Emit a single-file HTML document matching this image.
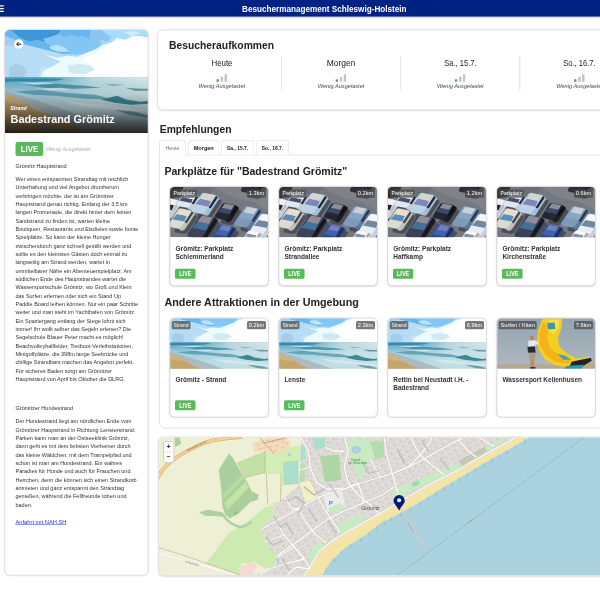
<!DOCTYPE html>
<html lang="de"><head><meta charset="utf-8"><title>Besuchermanagement Schleswig-Holstein</title>
<style>
*{box-sizing:border-box;margin:0;padding:0}
html,body{width:600px;height:600px;overflow:hidden;background:#fff;font-family:"Liberation Sans",sans-serif;color:#222}
.abs{position:absolute}
.t{position:absolute;white-space:nowrap;line-height:1;transform-origin:0 50%}
#hdr{left:0;top:0;width:2400px;height:66px;background:#002282;box-shadow:0 3.2px 8px rgba(0,0,0,.4)}
.card{position:absolute;background:#fff;border:3px solid #d6d6d6;border-radius:24px;box-shadow:0 2px 6px rgba(0,0,0,.12);overflow:hidden}
.live{position:absolute;background:#5cb85c;border-radius:6px}
.badge{position:absolute;background:rgba(75,75,75,.75);border-radius:6px;height:32.8px}
.pc{position:absolute;width:397.6px;height:399.2px;background:#fff;border:3px solid #cfcfcf;border-radius:20px;box-shadow:0 2px 6.4px rgba(0,0,0,.13);overflow:hidden}
.pc svg{position:absolute;left:0;top:0}
.tab{position:absolute;top:561.2px;height:57.6px;border:3px solid #dadada;border-bottom:none;border-radius:10px 10px 0 0;background:#fff}
.vline{position:absolute;top:223.2px;width:2.4px;height:137.6px;background:#cfcfcf}
.bar{position:absolute;width:9.6px;background:#c4c4c4}
</style></head><body><div style="position:absolute;left:0;top:0;width:2400px;height:2400px;transform:scale(0.25);transform-origin:0 0">
<div id="hdr" class="abs"></div>
<div class="abs" style="left:0;top:20.8px;width:15.2px;height:4.8px;background:#fff"></div>
<div class="abs" style="left:0;top:32px;width:15.2px;height:4.8px;background:#fff"></div>
<div class="abs" style="left:0;top:43.2px;width:15.2px;height:4.8px;background:#fff"></div>
<div class="t" style="left:968.4px;top:15.92px;font-size:36px;font-weight:bold;color:#fff;transform:scaleX(0.9066);">Besuchermanagement Schleswig-Holstein</div>
<div class="card" style="left:17.2px;top:116px;width:576.8px;height:2186.4px"><svg width="576" height="413.6" viewBox="0 0 144 103.4" style="position:absolute;left:0;top:0"><defs><linearGradient id="hsea" x1="0" y1="0" x2="0" y2="1"><stop offset="0" stop-color="#4a9cbc"/><stop offset="0.1" stop-color="#6db2cc"/><stop offset="0.28" stop-color="#a4d0de"/><stop offset="0.6" stop-color="#bcdce4"/><stop offset="1" stop-color="#b4c6cc"/></linearGradient><linearGradient id="hseaR" x1="0" y1="0" x2="1" y2="0"><stop offset="0" stop-color="#dfeceb" stop-opacity="0"/><stop offset="0.45" stop-color="#dfeceb" stop-opacity="0.75"/><stop offset="1" stop-color="#e6f0ee" stop-opacity="0.95"/></linearGradient><linearGradient id="hseaRv" x1="0" y1="0" x2="0" y2="1"><stop offset="0" stop-color="#fff" stop-opacity="1"/><stop offset="1" stop-color="#fff" stop-opacity="0"/></linearGradient><mask id="hm"><rect x="40" y="47" width="104" height="45" fill="url(#hseaRv)"/></mask><linearGradient id="hdark" x1="0" y1="0" x2="0" y2="1"><stop offset="0" stop-color="#000" stop-opacity="0"/><stop offset="0.3" stop-color="#000" stop-opacity="0.09"/><stop offset="0.55" stop-color="#000" stop-opacity="0.3"/><stop offset="0.8" stop-color="#000" stop-opacity="0.6"/><stop offset="1" stop-color="#000" stop-opacity="0.82"/></linearGradient><filter id="hb" x="-10%" y="-10%" width="120%" height="120%"><feGaussianBlur stdDeviation="0.7"/></filter></defs><symbol id="beachpic" viewBox="0 0 144 103.4" preserveAspectRatio="none"><rect width="144" height="48" fill="#a9d9f7"/><g filter="url(#hb)"><path d="M0 0H100L96 8L86 13L78 20L68 24L56 24L40 20L24 16L10 13L0 11Z" fill="#68b6ee"/><path d="M6 0H56L52 5L46 8L40 12L32 10L24 12L14 7Z" fill="#3f95d6"/><path d="M38 9L46 7L54 4L60 7L66 5L72 7L76 6L86 9L94 8L97 14L90 20L80 24L70 25L62 22L54 18L46 16L41 13Z" fill="#83c6f6"/><path d="M86 0H112L108 6L102 12L96 10L90 12L84 8Z" fill="#8ec4f0"/><path d="M96 0H144V10L128 8L118 12L110 10L104 6Z" fill="#a9dcfb"/><path d="M0 11L10 13L24 16L40 20L56 24L62 34L58 48H0Z" fill="#b7ddf6"/><path d="M0 6L8 9L16 13L12 17L0 15Z" fill="#a4cdf0"/><path d="M4 38L10 34L18 36L22 42L18 48H4Z" fill="#a6cde6"/><path d="M34 40L40 36L46 40L46 48H34Z" fill="#c9e5f3"/><path d="M44 17L52 15L60 18L64 22L54 22L47 20Z" fill="#b9e2fb"/><path d="M40 25L52 28L62 26L72 27L84 22L92 19L98 15L106 13L112 8L120 10L128 6L144 8V48H36L38 42L48 36L56 32Z" fill="#ecfbff"/><path d="M78 28L90 25L100 17L112 10L124 10L132 6L144 8V48H80L88 40Z" fill="#ffffff"/><path d="M62 36L74 34L86 36L90 40L80 44L68 44L64 42Z" fill="#d3e9f1"/><path d="M118 2L130 1L136 4L126 6Z" fill="#d0ecfb"/></g><rect y="47.4" width="144" height="56" fill="url(#hsea)"/><rect x="40" y="47.4" width="104" height="45" fill="url(#hseaR)" mask="url(#hm)"/><g filter="url(#hb)"><path d="M0 49H60L52 51L30 52L10 51.5L0 52Z" fill="#2e7d9d" opacity=".8"/><path d="M20 55L50 54L80 56L96 58L70 59L40 58Z" fill="#2d7f98" opacity=".7"/><path d="M14 53L40 52.5L50 54L30 55Z" fill="#d4ebf2" opacity=".8"/><path d="M30 59L56 58L66 60L44 61Z" fill="#d4ebf2" opacity=".8"/><path d="M10 62L36 60L60 63L90 65L110 70L80 69L50 66L28 65Z" fill="#4790a6" opacity=".7"/><path d="M96 70L112 66L122 70L136 72L144 71V74L126 75L110 73Z" fill="#2b7f8a" opacity=".9"/><path d="M120 58L136 59L144 59V61L130 61Z" fill="#4d8b8f" opacity=".8"/><path d="M100 54L120 55L108 56.5Z" fill="#5f9aa5" opacity=".6"/><path d="M110 80L130 82L144 86V88L124 85Z" fill="#3f8790" opacity=".7"/><path d="M60 72L90 74L120 78L144 80V83L110 80L80 77Z" fill="#dcedf0" opacity=".7"/><path d="M0 61L20 67L45 75L82 88L112 103.4H60L41 84L20 73L0 65Z" fill="#a9b7be" opacity=".9"/><path d="M0 65L8 67L20 73L30 79L41 84L60 92L86 103.4H0Z" fill="#c5a56c"/><path d="M0 65L8 67L20 73L22 76L10 74L0 72Z" fill="#d2b27a"/><path d="M30 92L50 96L66 103.4H40Z" fill="#b3a489"/></g></symbol><use href="#beachpic" x="0" y="0" width="144" height="103.4"/><rect y="48" width="144" height="55.4" fill="url(#hdark)"/></svg></div>
<div class="abs" style="left:56px;top:156.8px;width:38.4px;height:38.4px;border-radius:50%;background:#fff"></div>
<svg width="38.4" height="38.4" viewBox="0 0 9.6 9.6" class="abs" style="left:56px;top:156.8px"><path d="M7.3 4.9H2.8M4.7 2.9L2.7 4.9L4.7 6.9" fill="none" stroke="#111" stroke-width="1"/></svg>
<div class="t" style="left:40.8px;top:422.24px;font-size:22.4px;font-weight:bold;font-style:italic;color:#fff;transform:scaleX(0.9306);">Strand</div>
<div class="t" style="left:42px;top:454.48px;font-size:44.8px;font-weight:bold;color:#fff;transform:scaleX(0.9744);">Badestrand Grömitz</div>
<div class="live" style="left:62px;top:567.6px;width:110.8px;height:56.4px;border-radius:8px"></div>
<div class="t" style="left:82.6px;top:579.68px;font-size:34.4px;font-weight:bold;color:#fff;transform:scaleX(0.9156);">LIVE</div>
<div class="t" style="left:183.6px;top:584.12px;font-size:21.6px;font-style:italic;color:#b0b0b0;">Wenig Ausgelastet</div>
<div class="t" style="left:62px;top:652.56px;font-size:22px;color:#333;transform:scaleX(1.0090);">Grömitz Hauptstrand</div>
<div class="abs" style="left:62px;top:700.12px;font-size:22px;line-height:33.28px;white-space:nowrap;color:#333;transform-origin:0 0;">Wer einen entspannten Strandtag mit reichlich<br>
Unterhaltung und viel Angebot drumherum<br>
verbringen möchte, der ist am Grömitzer<br>
Hauptstrand genau richtig. Entlang der 3,5 km<br>
langen Promenade, die direkt hinter dem feinen<br>
Sandstrand zu finden ist, warten kleine<br>
Boutiquen, Restaurants und Eisdielen sowie bunte<br>
Spielplätze. So kann der kleine Hunger<br>
zwischendurch ganz schnell gestillt werden und<br>
sollte es den kleinsten Gästen doch einmal zu<br>
langweilig am Strand werden, wartet in<br>
unmittelbarer Nähe ein Abenteuerspielplatz. Am<br>
südlichen Ende des Hauptstrandes wartet die<br>
Wassersportschule Grömitz, wo Groß und Klein<br>
das Surfen erlernen oder sich ein Stand Up<br>
Paddle Board leihen können. Nur ein paar Schritte<br>
weiter und man steht im Yachthafen von Grömitz.<br>
Ein Spaziergang entlang der Stege lohnt sich<br>
immer! Ihr wollt selber das Segeln erlenen? Die<br>
Segelschule Blauer Peter macht es möglich!<br>
Beachvolleyballfelder, Tretboot-Verleihstationen,<br>
Minigolfplätze, die 398m lange Seebrücke und<br>
chillige Strandbars machen das Angebot perfekt.<br>
Für sicheres Baden sorgt am Grömitzer<br>
Hauptstrand von April bis Oktober die DLRG.</div>
<div class="t" style="left:62px;top:1622.16px;font-size:22px;color:#333;transform:scaleX(1.0059);">Grömitzer Hundestrand</div>
<div class="abs" style="left:62px;top:1668.92px;font-size:22px;line-height:33.28px;white-space:nowrap;color:#333;transform-origin:0 0;">Der Hundestrand liegt am nördlichen Ende vom<br>
Grömitzer Haupstrand in Richtung Lensterstrand.<br>
Parken kann man an der Ostseeklinik Grömitz,<br>
dann geht es mit dem liebsten Vierbeiner durch<br>
das kleine Wäldchen, mit dem Trampelpfad und<br>
schon ist man am Hundestrand. Ein wahres<br>
Paradies für Hunde und auch für Frauchen und<br>
Herrchen, denn die können sich einen Strandkorb<br>
anmieten und ganz entspannt den Strandtag<br>
genießen, während die Fellfreunde toben und<br>
baden.</div>
<div class="t" style="left:62.4px;top:2076.56px;font-size:22px;color:#1a3fd0;transform:scaleX(1.0429);"><u>Anfahrt mit NAH.SH</u></div>
<div class="card" style="left:628px;top:117.6px;width:1840px;height:323.2px"></div>
<div class="t" style="left:676.4px;top:158.28px;font-size:46px;font-weight:bold;transform:scaleX(0.8986);">Besucheraufkommen</div>
<div class="t" style="left:845.6px;top:235.08px;font-size:33.2px;transform:scaleX(0.9485);">Heute</div>
<div class="bar" style="left:866px;top:317.2px;height:9.6px;background:#4cae4c;border-radius:2px"></div><div class="bar" style="left:882.8px;top:306.8px;height:20px"></div><div class="bar" style="left:898px;top:296.8px;height:30px"></div>
<div class="t" style="left:794.4px;top:334.04px;font-size:21.2px;font-style:italic;color:#444;transform:scaleX(1.0621);">Wenig Ausgelastet</div>
<div class="vline" style="left:1124.8px"></div>
<div class="t" style="left:1307px;top:235.08px;font-size:33.2px;transform:scaleX(1.0202);">Morgen</div>
<div class="bar" style="left:1342.8px;top:317.2px;height:9.6px;background:#4cae4c;border-radius:2px"></div><div class="bar" style="left:1359.6px;top:306.8px;height:20px"></div><div class="bar" style="left:1374.8px;top:296.8px;height:30px"></div>
<div class="t" style="left:1271.2px;top:334.04px;font-size:21.2px;font-style:italic;color:#444;transform:scaleX(1.0621);">Wenig Ausgelastet</div>
<div class="vline" style="left:1601.6px"></div>
<div class="t" style="left:1776.6px;top:235.08px;font-size:33.2px;transform:scaleX(0.9094);">Sa., 15.7.</div>
<div class="bar" style="left:1819.6px;top:317.2px;height:9.6px;background:#4cae4c;border-radius:2px"></div><div class="bar" style="left:1836.4px;top:306.8px;height:20px"></div><div class="bar" style="left:1851.6px;top:296.8px;height:30px"></div>
<div class="t" style="left:1748px;top:334.04px;font-size:21.2px;font-style:italic;color:#444;transform:scaleX(1.0621);">Wenig Ausgelastet</div>
<div class="vline" style="left:2078.4px"></div>
<div class="t" style="left:2253.4px;top:235.08px;font-size:33.2px;transform:scaleX(0.9094);">So., 16.7.</div>
<div class="bar" style="left:2296.4px;top:317.2px;height:9.6px;background:#4cae4c;border-radius:2px"></div><div class="bar" style="left:2313.2px;top:306.8px;height:20px"></div><div class="bar" style="left:2328.4px;top:296.8px;height:30px"></div>
<div class="t" style="left:2224.8px;top:334.04px;font-size:21.2px;font-style:italic;color:#444;transform:scaleX(1.0621);">Wenig Ausgelastet</div>
<div class="t" style="left:639.2px;top:492.92px;font-size:45.2px;font-weight:bold;transform:scaleX(0.9139);">Empfehlungen</div>
<div class="abs" style="left:636px;top:618px;width:1840px;height:1095.6px;border:3px solid #dadada;border-radius:0 0 0 24px;background:#fff"></div>
<div class="tab" style="left:636px;width:107px;height:60.8px;"></div><div class="t" style="left:662px;top:581.12px;font-size:20.4px;color:#667386;transform:scaleX(1.0290);">Heute</div>
<div class="tab" style="left:753px;width:125px;background:#fff;"></div><div class="t" style="left:775px;top:581.12px;font-size:20.4px;font-weight:bold;transform:scaleX(1.0864);">Morgen</div>
<div class="tab" style="left:885px;width:133px;background:#fff;"></div><div class="t" style="left:908px;top:581.12px;font-size:20.4px;font-weight:bold;transform:scaleX(0.9737);">Sa., 15.7.</div>
<div class="tab" style="left:1025px;width:132px;background:#fff;"></div><div class="t" style="left:1047px;top:581.12px;font-size:20.4px;font-weight:bold;transform:scaleX(0.9728);">So., 16.7.</div>
<div class="t" style="left:658.4px;top:661.16px;font-size:44px;font-weight:bold;transform:scaleX(0.9553);">Parkplätze für "Badestrand Grömitz"</div>
<div class="t" style="left:658.4px;top:1185.16px;font-size:44px;font-weight:bold;transform:scaleX(0.9772);">Andere Attraktionen in der Umgebung</div>
<div class="pc" style="left:677.6px;top:745.2px"><svg width="401.6" height="202.8" viewBox="0 0 99 51" preserveAspectRatio="none" style="left:-2.4px;top:-2.4px"><defs><filter id="cb" x="-5%" y="-5%" width="110%" height="110%"><feGaussianBlur stdDeviation="0.55"/></filter></defs><rect width="99" height="51" fill="#74787f"/><g filter="url(#cb)"><path d="M44 0H99V26L84 16L66 12L52 6Z" fill="#7e8289"/><path d="M0 0H14L10 10L0 12Z" fill="#2e3138"/><path d="M22 0H44L40 8L30 10Z" fill="#6a6e76"/><polygon points="87.2,-6.4 98.7,-4.0 99.0,-2.5 90.1,11.3 87.1,12.6 77.2,10.6 76.4,8.5 85.2,-5.3" fill="#2b2e35" opacity="0.55"/><polygon points="92.6,-9.4 96.2,-7.0 96.5,-5.5 87.6,8.3 84.6,9.6 81.0,7.2" fill="#2b2f37"/><polygon points="93.3,-8.5 95.3,-7.2 89.0,2.5 87.0,1.2" fill="#1d2027"/><polygon points="81.1,-11.8 92.6,-9.4 92.9,-7.9 84.0,5.9 81.0,7.2 71.1,5.2 70.3,3.1 79.1,-10.7" fill="#2b2f37"/><polygon points="78.4,-6.6 88.8,-4.5 86.8,0.8 73.9,-1.8" fill="#4a5262"/><polygon points="81.7,-11.3 91.6,-9.3 88.7,-4.3 78.3,-6.5" fill="#7c8490"/><polygon points="6.8,17.5 14.2,19.1 14.1,20.5 5.2,34.3 2.9,35.7 -3.5,34.5 -3.6,32.5 5.2,18.7" fill="#2b2e35" opacity="0.55"/><polygon points="8.1,13.7 11.7,16.1 11.6,17.5 2.7,31.3 0.4,32.7 -3.2,30.3" fill="#c9ced8"/><polygon points="8.4,14.5 10.4,15.8 4.1,25.5 2.1,24.2" fill="#b9bec8"/><polygon points="0.7,12.1 8.1,13.7 8.0,15.1 -0.9,28.9 -3.2,30.3 -9.6,29.1 -9.7,27.1 -0.9,13.3" fill="#e6e8ec"/><polygon points="-2.2,17.3 4.5,18.6 2.1,23.8 -6.2,22.1" fill="#23262e"/><polygon points="1.0,12.6 7.4,13.9 4.4,18.8 -2.3,17.4" fill="#f0f0f2"/><polygon points="21.1,12.1 31.8,14.3 32.2,15.5 25.6,25.8 23.0,26.7 13.8,24.9 12.8,23.2 19.5,12.9" fill="#2b2e35" opacity="0.55"/><polygon points="25.7,8.9 29.3,11.3 29.7,12.5 23.1,22.8 20.5,23.7 16.9,21.3" fill="#c4cede"/><polygon points="26.4,9.6 28.4,10.9 23.7,18.2 21.7,16.9" fill="#2a2e38"/><polygon points="15.0,6.7 25.7,8.9 26.1,10.1 19.5,20.4 16.9,21.3 7.7,19.5 6.7,17.8 13.4,7.5" fill="#e0e7f4"/><polygon points="13.1,10.6 22.8,12.6 21.5,16.6 9.5,14.1" fill="#46526a"/><polygon points="15.6,7.1 24.8,9.0 22.7,12.7 13.0,10.7" fill="#f0f4fa"/><polygon points="39.7,11.6 51.2,14.0 51.3,15.7 41.1,31.6 38.0,33.1 28.1,31.1 27.4,28.8 37.6,12.9" fill="#2b2e35" opacity="0.55"/><polygon points="45.1,8.6 48.7,11.0 48.8,12.7 38.6,28.6 35.5,30.1 31.9,27.7" fill="#a3bfd9"/><polygon points="45.7,9.6 47.7,10.9 40.5,22.1 38.5,20.8" fill="#23262e"/><polygon points="33.6,6.2 45.1,8.6 45.2,10.3 35.0,26.2 31.9,27.7 22.0,25.7 21.3,23.4 31.5,7.5" fill="#bcd3e6"/><polygon points="30.4,12.1 40.8,14.3 38.4,20.3 25.5,17.7" fill="#7f86b8"/><polygon points="34.2,6.8 44.1,8.8 40.7,14.5 30.3,12.3" fill="#d8d4c8"/><polygon points="60.1,21.9 70.8,24.1 71.1,25.5 63.1,37.9 60.3,39.1 51.2,37.2 50.4,35.3 58.3,22.9" fill="#2b2e35" opacity="0.55"/><polygon points="64.7,18.7 68.3,21.1 68.6,22.5 60.6,34.9 57.8,36.1 54.2,33.7" fill="#1a1c22"/><polygon points="65.4,19.5 67.3,20.8 61.7,29.6 59.7,28.3" fill="#101116"/><polygon points="54.0,16.5 64.7,18.7 65.0,20.1 57.0,32.5 54.2,33.7 45.1,31.8 44.3,29.9 52.2,17.5" fill="#262830"/><polygon points="51.6,21.1 61.3,23.1 59.5,27.9 47.6,25.4" fill="#3c4a66"/><polygon points="54.6,17.0 63.8,18.8 61.2,23.3 51.5,21.3" fill="#8a90a0"/><polygon points="16.6,27.3 27.3,29.5 27.4,31.2 17.6,46.3 14.7,47.8 5.5,45.9 4.9,43.7 14.6,28.6" fill="#2b2e35" opacity="0.55"/><polygon points="21.2,24.1 24.8,26.5 24.9,28.2 15.1,43.3 12.2,44.8 8.6,42.4" fill="#c2c0ba"/><polygon points="21.8,25.0 23.7,26.4 16.9,37.1 14.9,35.8" fill="#44474e"/><polygon points="10.5,21.9 21.2,24.1 21.3,25.8 11.5,40.9 8.6,42.4 -0.6,40.5 -1.2,38.3 8.5,23.2" fill="#dcdad4"/><polygon points="7.5,27.6 17.1,29.5 14.7,35.3 2.8,32.9" fill="#5b8db4"/><polygon points="11.0,22.4 20.2,24.3 17.0,29.7 7.3,27.7" fill="#e6dfcf"/><polygon points="82.2,25.1 93.7,27.5 93.8,29.2 83.6,45.1 80.5,46.6 70.6,44.6 69.9,42.3 80.1,26.4" fill="#2b2e35" opacity="0.55"/><polygon points="87.6,22.1 91.2,24.5 91.3,26.2 81.1,42.1 78.0,43.6 74.4,41.2" fill="#5a7a9e"/><polygon points="88.2,23.1 90.2,24.4 83.0,35.6 81.0,34.3" fill="#2a3444"/><polygon points="76.1,19.7 87.6,22.1 87.7,23.8 77.5,39.7 74.4,41.2 64.5,39.2 63.8,36.9 74.0,21.0" fill="#7d9aba"/><polygon points="72.9,25.6 83.3,27.8 80.9,33.8 68.0,31.2" fill="#86a6c6"/><polygon points="76.7,20.3 86.6,22.3 83.2,28.0 72.8,25.8" fill="#c9d0da"/><polygon points="37.6,33.8 49.9,36.4 50.0,38.3 38.5,56.3 35.0,58.0 24.4,55.9 23.8,53.3 35.3,35.3" fill="#2b2e35" opacity="0.55"/><polygon points="43.8,31.0 47.4,33.4 47.5,35.3 36.0,53.3 32.5,55.0 28.9,52.6" fill="#1c1e26"/><polygon points="44.4,32.1 46.4,33.4 38.3,46.1 36.3,44.7" fill="#14151a"/><polygon points="31.5,28.4 43.8,31.0 43.9,32.9 32.4,50.9 28.9,52.6 18.3,50.5 17.7,47.9 29.2,29.9" fill="#3c4256"/><polygon points="27.9,35.1 39.0,37.4 36.1,44.2 22.3,41.4" fill="#44709a"/><polygon points="32.1,29.1 42.7,31.2 38.9,37.6 27.7,35.3" fill="#948c94"/><polygon points="97.7,32.6 109.2,35.0 109.3,36.8 98.7,53.3 95.4,55.0 85.6,53.0 84.9,50.5 95.6,34.0" fill="#2b2e35" opacity="0.55"/><polygon points="103.1,29.6 106.7,32.0 106.8,33.8 96.2,50.3 92.9,52.0 89.3,49.6" fill="#c4ccd8"/><polygon points="103.7,30.6 105.7,31.9 98.2,43.6 96.2,42.3" fill="#8a94a4"/><polygon points="91.6,27.2 103.1,29.6 103.2,31.4 92.6,47.9 89.3,49.6 79.5,47.6 78.8,45.1 89.5,28.6" fill="#e8edf4"/><polygon points="88.3,33.4 98.7,35.5 96.0,41.8 83.1,39.2" fill="#7088a4"/><polygon points="92.2,27.8 102.0,29.8 98.6,35.7 88.1,33.6" fill="#f6f7fa"/><polygon points="57.6,43.4 68.3,45.6 68.5,47.1 59.6,60.9 56.8,62.2 47.6,60.4 46.9,58.3 55.7,44.5" fill="#2b2e35" opacity="0.55"/><polygon points="62.2,40.2 65.8,42.6 66.0,44.1 57.1,57.9 54.3,59.2 50.7,56.8" fill="#2c468a"/><polygon points="62.8,41.1 64.8,42.4 58.5,52.1 56.5,50.8" fill="#1c2a50"/><polygon points="51.5,38.0 62.2,40.2 62.4,41.7 53.5,55.5 50.7,56.8 41.5,55.0 40.8,52.9 49.6,39.1" fill="#2f4c92"/><polygon points="48.8,43.2 58.5,45.1 56.4,50.4 44.4,48.0" fill="#3f62a8"/><polygon points="52.1,38.5 61.2,40.4 58.4,45.3 48.7,43.3" fill="#6f80c0"/><polygon points="85.0,49.6 94.0,51.4 94.4,52.4 89.0,60.7 86.9,61.4 79.1,59.8 78.3,58.5 83.6,50.2" fill="#2b2e35" opacity="0.55"/><polygon points="87.9,46.0 91.5,48.4 91.9,49.4 86.5,57.7 84.4,58.4 80.8,56.0" fill="#c8ccd4"/><polygon points="88.5,46.6 90.5,47.9 86.7,53.8 84.8,52.4" fill="#a0a8b4"/><polygon points="78.9,44.2 87.9,46.0 88.3,47.0 82.9,55.3 80.8,56.0 73.0,54.4 72.2,53.1 77.5,44.8" fill="#eef0f4"/><polygon points="77.3,47.3 85.5,49.0 84.6,52.2 74.4,50.1" fill="#8090a8"/><polygon points="79.4,44.5 87.1,46.1 85.5,49.1 77.3,47.4" fill="#f8f8f8"/></g></svg></div>
<div class="badge" style="left:687.2px;top:758px;width:100px"></div><div class="t" style="left:694.2px;top:764.4px;font-size:20.8px;color:#fff;transform:scaleX(0.9919);">Parkplatz</div><div class="badge" style="left:988px;top:758px;width:76px"></div><div class="t" style="left:995px;top:764.4px;font-size:20.8px;color:#fff;transform:scaleX(1.0946);">1.3km</div>
<div class="t" style="left:701.6px;top:980px;font-size:26px;font-weight:bold;color:#333;transform:scaleX(1.0082);">Grömitz: Parkplatz</div><div class="t" style="left:701.6px;top:1014px;font-size:26px;font-weight:bold;color:#333;">Schlemmerland</div>
<div class="live" style="left:700.4px;top:1075.2px;width:81.2px;height:39.6px"></div><div class="t" style="left:716.8px;top:1082.72px;font-size:25.6px;font-weight:bold;color:#fff;transform:scaleX(0.8578);">LIVE</div>
<div class="pc" style="left:1113.6px;top:745.2px"><svg width="401.6" height="202.8" viewBox="0 0 99 51" preserveAspectRatio="none" style="left:-2.4px;top:-2.4px"><defs><filter id="cb" x="-5%" y="-5%" width="110%" height="110%"><feGaussianBlur stdDeviation="0.55"/></filter></defs><rect width="99" height="51" fill="#74787f"/><g filter="url(#cb)"><path d="M44 0H99V26L84 16L66 12L52 6Z" fill="#7e8289"/><path d="M0 0H14L10 10L0 12Z" fill="#2e3138"/><path d="M22 0H44L40 8L30 10Z" fill="#6a6e76"/><polygon points="87.2,-6.4 98.7,-4.0 99.0,-2.5 90.1,11.3 87.1,12.6 77.2,10.6 76.4,8.5 85.2,-5.3" fill="#2b2e35" opacity="0.55"/><polygon points="92.6,-9.4 96.2,-7.0 96.5,-5.5 87.6,8.3 84.6,9.6 81.0,7.2" fill="#2b2f37"/><polygon points="93.3,-8.5 95.3,-7.2 89.0,2.5 87.0,1.2" fill="#1d2027"/><polygon points="81.1,-11.8 92.6,-9.4 92.9,-7.9 84.0,5.9 81.0,7.2 71.1,5.2 70.3,3.1 79.1,-10.7" fill="#2b2f37"/><polygon points="78.4,-6.6 88.8,-4.5 86.8,0.8 73.9,-1.8" fill="#4a5262"/><polygon points="81.7,-11.3 91.6,-9.3 88.7,-4.3 78.3,-6.5" fill="#7c8490"/><polygon points="6.8,17.5 14.2,19.1 14.1,20.5 5.2,34.3 2.9,35.7 -3.5,34.5 -3.6,32.5 5.2,18.7" fill="#2b2e35" opacity="0.55"/><polygon points="8.1,13.7 11.7,16.1 11.6,17.5 2.7,31.3 0.4,32.7 -3.2,30.3" fill="#c9ced8"/><polygon points="8.4,14.5 10.4,15.8 4.1,25.5 2.1,24.2" fill="#b9bec8"/><polygon points="0.7,12.1 8.1,13.7 8.0,15.1 -0.9,28.9 -3.2,30.3 -9.6,29.1 -9.7,27.1 -0.9,13.3" fill="#e6e8ec"/><polygon points="-2.2,17.3 4.5,18.6 2.1,23.8 -6.2,22.1" fill="#23262e"/><polygon points="1.0,12.6 7.4,13.9 4.4,18.8 -2.3,17.4" fill="#f0f0f2"/><polygon points="21.1,12.1 31.8,14.3 32.2,15.5 25.6,25.8 23.0,26.7 13.8,24.9 12.8,23.2 19.5,12.9" fill="#2b2e35" opacity="0.55"/><polygon points="25.7,8.9 29.3,11.3 29.7,12.5 23.1,22.8 20.5,23.7 16.9,21.3" fill="#c4cede"/><polygon points="26.4,9.6 28.4,10.9 23.7,18.2 21.7,16.9" fill="#2a2e38"/><polygon points="15.0,6.7 25.7,8.9 26.1,10.1 19.5,20.4 16.9,21.3 7.7,19.5 6.7,17.8 13.4,7.5" fill="#e0e7f4"/><polygon points="13.1,10.6 22.8,12.6 21.5,16.6 9.5,14.1" fill="#46526a"/><polygon points="15.6,7.1 24.8,9.0 22.7,12.7 13.0,10.7" fill="#f0f4fa"/><polygon points="39.7,11.6 51.2,14.0 51.3,15.7 41.1,31.6 38.0,33.1 28.1,31.1 27.4,28.8 37.6,12.9" fill="#2b2e35" opacity="0.55"/><polygon points="45.1,8.6 48.7,11.0 48.8,12.7 38.6,28.6 35.5,30.1 31.9,27.7" fill="#a3bfd9"/><polygon points="45.7,9.6 47.7,10.9 40.5,22.1 38.5,20.8" fill="#23262e"/><polygon points="33.6,6.2 45.1,8.6 45.2,10.3 35.0,26.2 31.9,27.7 22.0,25.7 21.3,23.4 31.5,7.5" fill="#bcd3e6"/><polygon points="30.4,12.1 40.8,14.3 38.4,20.3 25.5,17.7" fill="#7f86b8"/><polygon points="34.2,6.8 44.1,8.8 40.7,14.5 30.3,12.3" fill="#d8d4c8"/><polygon points="60.1,21.9 70.8,24.1 71.1,25.5 63.1,37.9 60.3,39.1 51.2,37.2 50.4,35.3 58.3,22.9" fill="#2b2e35" opacity="0.55"/><polygon points="64.7,18.7 68.3,21.1 68.6,22.5 60.6,34.9 57.8,36.1 54.2,33.7" fill="#1a1c22"/><polygon points="65.4,19.5 67.3,20.8 61.7,29.6 59.7,28.3" fill="#101116"/><polygon points="54.0,16.5 64.7,18.7 65.0,20.1 57.0,32.5 54.2,33.7 45.1,31.8 44.3,29.9 52.2,17.5" fill="#262830"/><polygon points="51.6,21.1 61.3,23.1 59.5,27.9 47.6,25.4" fill="#3c4a66"/><polygon points="54.6,17.0 63.8,18.8 61.2,23.3 51.5,21.3" fill="#8a90a0"/><polygon points="16.6,27.3 27.3,29.5 27.4,31.2 17.6,46.3 14.7,47.8 5.5,45.9 4.9,43.7 14.6,28.6" fill="#2b2e35" opacity="0.55"/><polygon points="21.2,24.1 24.8,26.5 24.9,28.2 15.1,43.3 12.2,44.8 8.6,42.4" fill="#c2c0ba"/><polygon points="21.8,25.0 23.7,26.4 16.9,37.1 14.9,35.8" fill="#44474e"/><polygon points="10.5,21.9 21.2,24.1 21.3,25.8 11.5,40.9 8.6,42.4 -0.6,40.5 -1.2,38.3 8.5,23.2" fill="#dcdad4"/><polygon points="7.5,27.6 17.1,29.5 14.7,35.3 2.8,32.9" fill="#5b8db4"/><polygon points="11.0,22.4 20.2,24.3 17.0,29.7 7.3,27.7" fill="#e6dfcf"/><polygon points="82.2,25.1 93.7,27.5 93.8,29.2 83.6,45.1 80.5,46.6 70.6,44.6 69.9,42.3 80.1,26.4" fill="#2b2e35" opacity="0.55"/><polygon points="87.6,22.1 91.2,24.5 91.3,26.2 81.1,42.1 78.0,43.6 74.4,41.2" fill="#5a7a9e"/><polygon points="88.2,23.1 90.2,24.4 83.0,35.6 81.0,34.3" fill="#2a3444"/><polygon points="76.1,19.7 87.6,22.1 87.7,23.8 77.5,39.7 74.4,41.2 64.5,39.2 63.8,36.9 74.0,21.0" fill="#7d9aba"/><polygon points="72.9,25.6 83.3,27.8 80.9,33.8 68.0,31.2" fill="#86a6c6"/><polygon points="76.7,20.3 86.6,22.3 83.2,28.0 72.8,25.8" fill="#c9d0da"/><polygon points="37.6,33.8 49.9,36.4 50.0,38.3 38.5,56.3 35.0,58.0 24.4,55.9 23.8,53.3 35.3,35.3" fill="#2b2e35" opacity="0.55"/><polygon points="43.8,31.0 47.4,33.4 47.5,35.3 36.0,53.3 32.5,55.0 28.9,52.6" fill="#1c1e26"/><polygon points="44.4,32.1 46.4,33.4 38.3,46.1 36.3,44.7" fill="#14151a"/><polygon points="31.5,28.4 43.8,31.0 43.9,32.9 32.4,50.9 28.9,52.6 18.3,50.5 17.7,47.9 29.2,29.9" fill="#3c4256"/><polygon points="27.9,35.1 39.0,37.4 36.1,44.2 22.3,41.4" fill="#44709a"/><polygon points="32.1,29.1 42.7,31.2 38.9,37.6 27.7,35.3" fill="#948c94"/><polygon points="97.7,32.6 109.2,35.0 109.3,36.8 98.7,53.3 95.4,55.0 85.6,53.0 84.9,50.5 95.6,34.0" fill="#2b2e35" opacity="0.55"/><polygon points="103.1,29.6 106.7,32.0 106.8,33.8 96.2,50.3 92.9,52.0 89.3,49.6" fill="#c4ccd8"/><polygon points="103.7,30.6 105.7,31.9 98.2,43.6 96.2,42.3" fill="#8a94a4"/><polygon points="91.6,27.2 103.1,29.6 103.2,31.4 92.6,47.9 89.3,49.6 79.5,47.6 78.8,45.1 89.5,28.6" fill="#e8edf4"/><polygon points="88.3,33.4 98.7,35.5 96.0,41.8 83.1,39.2" fill="#7088a4"/><polygon points="92.2,27.8 102.0,29.8 98.6,35.7 88.1,33.6" fill="#f6f7fa"/><polygon points="57.6,43.4 68.3,45.6 68.5,47.1 59.6,60.9 56.8,62.2 47.6,60.4 46.9,58.3 55.7,44.5" fill="#2b2e35" opacity="0.55"/><polygon points="62.2,40.2 65.8,42.6 66.0,44.1 57.1,57.9 54.3,59.2 50.7,56.8" fill="#2c468a"/><polygon points="62.8,41.1 64.8,42.4 58.5,52.1 56.5,50.8" fill="#1c2a50"/><polygon points="51.5,38.0 62.2,40.2 62.4,41.7 53.5,55.5 50.7,56.8 41.5,55.0 40.8,52.9 49.6,39.1" fill="#2f4c92"/><polygon points="48.8,43.2 58.5,45.1 56.4,50.4 44.4,48.0" fill="#3f62a8"/><polygon points="52.1,38.5 61.2,40.4 58.4,45.3 48.7,43.3" fill="#6f80c0"/><polygon points="85.0,49.6 94.0,51.4 94.4,52.4 89.0,60.7 86.9,61.4 79.1,59.8 78.3,58.5 83.6,50.2" fill="#2b2e35" opacity="0.55"/><polygon points="87.9,46.0 91.5,48.4 91.9,49.4 86.5,57.7 84.4,58.4 80.8,56.0" fill="#c8ccd4"/><polygon points="88.5,46.6 90.5,47.9 86.7,53.8 84.8,52.4" fill="#a0a8b4"/><polygon points="78.9,44.2 87.9,46.0 88.3,47.0 82.9,55.3 80.8,56.0 73.0,54.4 72.2,53.1 77.5,44.8" fill="#eef0f4"/><polygon points="77.3,47.3 85.5,49.0 84.6,52.2 74.4,50.1" fill="#8090a8"/><polygon points="79.4,44.5 87.1,46.1 85.5,49.1 77.3,47.4" fill="#f8f8f8"/></g></svg></div>
<div class="badge" style="left:1123.2px;top:758px;width:100px"></div><div class="t" style="left:1130.2px;top:764.4px;font-size:20.8px;color:#fff;transform:scaleX(0.9919);">Parkplatz</div><div class="badge" style="left:1424px;top:758px;width:76px"></div><div class="t" style="left:1431px;top:764.4px;font-size:20.8px;color:#fff;transform:scaleX(1.0946);">0.2km</div>
<div class="t" style="left:1137.6px;top:980px;font-size:26px;font-weight:bold;color:#333;transform:scaleX(1.0082);">Grömitz: Parkplatz</div><div class="t" style="left:1137.6px;top:1014px;font-size:26px;font-weight:bold;color:#333;">Strandallee</div>
<div class="live" style="left:1136.4px;top:1075.2px;width:81.2px;height:39.6px"></div><div class="t" style="left:1152.8px;top:1082.72px;font-size:25.6px;font-weight:bold;color:#fff;transform:scaleX(0.8578);">LIVE</div>
<div class="pc" style="left:1549.2px;top:745.2px"><svg width="401.6" height="202.8" viewBox="0 0 99 51" preserveAspectRatio="none" style="left:-2.4px;top:-2.4px"><defs><filter id="cb" x="-5%" y="-5%" width="110%" height="110%"><feGaussianBlur stdDeviation="0.55"/></filter></defs><rect width="99" height="51" fill="#74787f"/><g filter="url(#cb)"><path d="M44 0H99V26L84 16L66 12L52 6Z" fill="#7e8289"/><path d="M0 0H14L10 10L0 12Z" fill="#2e3138"/><path d="M22 0H44L40 8L30 10Z" fill="#6a6e76"/><polygon points="87.2,-6.4 98.7,-4.0 99.0,-2.5 90.1,11.3 87.1,12.6 77.2,10.6 76.4,8.5 85.2,-5.3" fill="#2b2e35" opacity="0.55"/><polygon points="92.6,-9.4 96.2,-7.0 96.5,-5.5 87.6,8.3 84.6,9.6 81.0,7.2" fill="#2b2f37"/><polygon points="93.3,-8.5 95.3,-7.2 89.0,2.5 87.0,1.2" fill="#1d2027"/><polygon points="81.1,-11.8 92.6,-9.4 92.9,-7.9 84.0,5.9 81.0,7.2 71.1,5.2 70.3,3.1 79.1,-10.7" fill="#2b2f37"/><polygon points="78.4,-6.6 88.8,-4.5 86.8,0.8 73.9,-1.8" fill="#4a5262"/><polygon points="81.7,-11.3 91.6,-9.3 88.7,-4.3 78.3,-6.5" fill="#7c8490"/><polygon points="6.8,17.5 14.2,19.1 14.1,20.5 5.2,34.3 2.9,35.7 -3.5,34.5 -3.6,32.5 5.2,18.7" fill="#2b2e35" opacity="0.55"/><polygon points="8.1,13.7 11.7,16.1 11.6,17.5 2.7,31.3 0.4,32.7 -3.2,30.3" fill="#c9ced8"/><polygon points="8.4,14.5 10.4,15.8 4.1,25.5 2.1,24.2" fill="#b9bec8"/><polygon points="0.7,12.1 8.1,13.7 8.0,15.1 -0.9,28.9 -3.2,30.3 -9.6,29.1 -9.7,27.1 -0.9,13.3" fill="#e6e8ec"/><polygon points="-2.2,17.3 4.5,18.6 2.1,23.8 -6.2,22.1" fill="#23262e"/><polygon points="1.0,12.6 7.4,13.9 4.4,18.8 -2.3,17.4" fill="#f0f0f2"/><polygon points="21.1,12.1 31.8,14.3 32.2,15.5 25.6,25.8 23.0,26.7 13.8,24.9 12.8,23.2 19.5,12.9" fill="#2b2e35" opacity="0.55"/><polygon points="25.7,8.9 29.3,11.3 29.7,12.5 23.1,22.8 20.5,23.7 16.9,21.3" fill="#c4cede"/><polygon points="26.4,9.6 28.4,10.9 23.7,18.2 21.7,16.9" fill="#2a2e38"/><polygon points="15.0,6.7 25.7,8.9 26.1,10.1 19.5,20.4 16.9,21.3 7.7,19.5 6.7,17.8 13.4,7.5" fill="#e0e7f4"/><polygon points="13.1,10.6 22.8,12.6 21.5,16.6 9.5,14.1" fill="#46526a"/><polygon points="15.6,7.1 24.8,9.0 22.7,12.7 13.0,10.7" fill="#f0f4fa"/><polygon points="39.7,11.6 51.2,14.0 51.3,15.7 41.1,31.6 38.0,33.1 28.1,31.1 27.4,28.8 37.6,12.9" fill="#2b2e35" opacity="0.55"/><polygon points="45.1,8.6 48.7,11.0 48.8,12.7 38.6,28.6 35.5,30.1 31.9,27.7" fill="#a3bfd9"/><polygon points="45.7,9.6 47.7,10.9 40.5,22.1 38.5,20.8" fill="#23262e"/><polygon points="33.6,6.2 45.1,8.6 45.2,10.3 35.0,26.2 31.9,27.7 22.0,25.7 21.3,23.4 31.5,7.5" fill="#bcd3e6"/><polygon points="30.4,12.1 40.8,14.3 38.4,20.3 25.5,17.7" fill="#7f86b8"/><polygon points="34.2,6.8 44.1,8.8 40.7,14.5 30.3,12.3" fill="#d8d4c8"/><polygon points="60.1,21.9 70.8,24.1 71.1,25.5 63.1,37.9 60.3,39.1 51.2,37.2 50.4,35.3 58.3,22.9" fill="#2b2e35" opacity="0.55"/><polygon points="64.7,18.7 68.3,21.1 68.6,22.5 60.6,34.9 57.8,36.1 54.2,33.7" fill="#1a1c22"/><polygon points="65.4,19.5 67.3,20.8 61.7,29.6 59.7,28.3" fill="#101116"/><polygon points="54.0,16.5 64.7,18.7 65.0,20.1 57.0,32.5 54.2,33.7 45.1,31.8 44.3,29.9 52.2,17.5" fill="#262830"/><polygon points="51.6,21.1 61.3,23.1 59.5,27.9 47.6,25.4" fill="#3c4a66"/><polygon points="54.6,17.0 63.8,18.8 61.2,23.3 51.5,21.3" fill="#8a90a0"/><polygon points="16.6,27.3 27.3,29.5 27.4,31.2 17.6,46.3 14.7,47.8 5.5,45.9 4.9,43.7 14.6,28.6" fill="#2b2e35" opacity="0.55"/><polygon points="21.2,24.1 24.8,26.5 24.9,28.2 15.1,43.3 12.2,44.8 8.6,42.4" fill="#c2c0ba"/><polygon points="21.8,25.0 23.7,26.4 16.9,37.1 14.9,35.8" fill="#44474e"/><polygon points="10.5,21.9 21.2,24.1 21.3,25.8 11.5,40.9 8.6,42.4 -0.6,40.5 -1.2,38.3 8.5,23.2" fill="#dcdad4"/><polygon points="7.5,27.6 17.1,29.5 14.7,35.3 2.8,32.9" fill="#5b8db4"/><polygon points="11.0,22.4 20.2,24.3 17.0,29.7 7.3,27.7" fill="#e6dfcf"/><polygon points="82.2,25.1 93.7,27.5 93.8,29.2 83.6,45.1 80.5,46.6 70.6,44.6 69.9,42.3 80.1,26.4" fill="#2b2e35" opacity="0.55"/><polygon points="87.6,22.1 91.2,24.5 91.3,26.2 81.1,42.1 78.0,43.6 74.4,41.2" fill="#5a7a9e"/><polygon points="88.2,23.1 90.2,24.4 83.0,35.6 81.0,34.3" fill="#2a3444"/><polygon points="76.1,19.7 87.6,22.1 87.7,23.8 77.5,39.7 74.4,41.2 64.5,39.2 63.8,36.9 74.0,21.0" fill="#7d9aba"/><polygon points="72.9,25.6 83.3,27.8 80.9,33.8 68.0,31.2" fill="#86a6c6"/><polygon points="76.7,20.3 86.6,22.3 83.2,28.0 72.8,25.8" fill="#c9d0da"/><polygon points="37.6,33.8 49.9,36.4 50.0,38.3 38.5,56.3 35.0,58.0 24.4,55.9 23.8,53.3 35.3,35.3" fill="#2b2e35" opacity="0.55"/><polygon points="43.8,31.0 47.4,33.4 47.5,35.3 36.0,53.3 32.5,55.0 28.9,52.6" fill="#1c1e26"/><polygon points="44.4,32.1 46.4,33.4 38.3,46.1 36.3,44.7" fill="#14151a"/><polygon points="31.5,28.4 43.8,31.0 43.9,32.9 32.4,50.9 28.9,52.6 18.3,50.5 17.7,47.9 29.2,29.9" fill="#3c4256"/><polygon points="27.9,35.1 39.0,37.4 36.1,44.2 22.3,41.4" fill="#44709a"/><polygon points="32.1,29.1 42.7,31.2 38.9,37.6 27.7,35.3" fill="#948c94"/><polygon points="97.7,32.6 109.2,35.0 109.3,36.8 98.7,53.3 95.4,55.0 85.6,53.0 84.9,50.5 95.6,34.0" fill="#2b2e35" opacity="0.55"/><polygon points="103.1,29.6 106.7,32.0 106.8,33.8 96.2,50.3 92.9,52.0 89.3,49.6" fill="#c4ccd8"/><polygon points="103.7,30.6 105.7,31.9 98.2,43.6 96.2,42.3" fill="#8a94a4"/><polygon points="91.6,27.2 103.1,29.6 103.2,31.4 92.6,47.9 89.3,49.6 79.5,47.6 78.8,45.1 89.5,28.6" fill="#e8edf4"/><polygon points="88.3,33.4 98.7,35.5 96.0,41.8 83.1,39.2" fill="#7088a4"/><polygon points="92.2,27.8 102.0,29.8 98.6,35.7 88.1,33.6" fill="#f6f7fa"/><polygon points="57.6,43.4 68.3,45.6 68.5,47.1 59.6,60.9 56.8,62.2 47.6,60.4 46.9,58.3 55.7,44.5" fill="#2b2e35" opacity="0.55"/><polygon points="62.2,40.2 65.8,42.6 66.0,44.1 57.1,57.9 54.3,59.2 50.7,56.8" fill="#2c468a"/><polygon points="62.8,41.1 64.8,42.4 58.5,52.1 56.5,50.8" fill="#1c2a50"/><polygon points="51.5,38.0 62.2,40.2 62.4,41.7 53.5,55.5 50.7,56.8 41.5,55.0 40.8,52.9 49.6,39.1" fill="#2f4c92"/><polygon points="48.8,43.2 58.5,45.1 56.4,50.4 44.4,48.0" fill="#3f62a8"/><polygon points="52.1,38.5 61.2,40.4 58.4,45.3 48.7,43.3" fill="#6f80c0"/><polygon points="85.0,49.6 94.0,51.4 94.4,52.4 89.0,60.7 86.9,61.4 79.1,59.8 78.3,58.5 83.6,50.2" fill="#2b2e35" opacity="0.55"/><polygon points="87.9,46.0 91.5,48.4 91.9,49.4 86.5,57.7 84.4,58.4 80.8,56.0" fill="#c8ccd4"/><polygon points="88.5,46.6 90.5,47.9 86.7,53.8 84.8,52.4" fill="#a0a8b4"/><polygon points="78.9,44.2 87.9,46.0 88.3,47.0 82.9,55.3 80.8,56.0 73.0,54.4 72.2,53.1 77.5,44.8" fill="#eef0f4"/><polygon points="77.3,47.3 85.5,49.0 84.6,52.2 74.4,50.1" fill="#8090a8"/><polygon points="79.4,44.5 87.1,46.1 85.5,49.1 77.3,47.4" fill="#f8f8f8"/></g></svg></div>
<div class="badge" style="left:1558.8px;top:758px;width:100px"></div><div class="t" style="left:1565.8px;top:764.4px;font-size:20.8px;color:#fff;transform:scaleX(0.9919);">Parkplatz</div><div class="badge" style="left:1859.6px;top:758px;width:76px"></div><div class="t" style="left:1866.6px;top:764.4px;font-size:20.8px;color:#fff;transform:scaleX(1.0946);">1.2km</div>
<div class="t" style="left:1573.2px;top:980px;font-size:26px;font-weight:bold;color:#333;transform:scaleX(1.0082);">Grömitz: Parkplatz</div><div class="t" style="left:1573.2px;top:1014px;font-size:26px;font-weight:bold;color:#333;">Haffkamp</div>
<div class="live" style="left:1572px;top:1075.2px;width:81.2px;height:39.6px"></div><div class="t" style="left:1588.4px;top:1082.72px;font-size:25.6px;font-weight:bold;color:#fff;transform:scaleX(0.8578);">LIVE</div>
<div class="pc" style="left:1985.6px;top:745.2px"><svg width="401.6" height="202.8" viewBox="0 0 99 51" preserveAspectRatio="none" style="left:-2.4px;top:-2.4px"><defs><filter id="cb" x="-5%" y="-5%" width="110%" height="110%"><feGaussianBlur stdDeviation="0.55"/></filter></defs><rect width="99" height="51" fill="#74787f"/><g filter="url(#cb)"><path d="M44 0H99V26L84 16L66 12L52 6Z" fill="#7e8289"/><path d="M0 0H14L10 10L0 12Z" fill="#2e3138"/><path d="M22 0H44L40 8L30 10Z" fill="#6a6e76"/><polygon points="87.2,-6.4 98.7,-4.0 99.0,-2.5 90.1,11.3 87.1,12.6 77.2,10.6 76.4,8.5 85.2,-5.3" fill="#2b2e35" opacity="0.55"/><polygon points="92.6,-9.4 96.2,-7.0 96.5,-5.5 87.6,8.3 84.6,9.6 81.0,7.2" fill="#2b2f37"/><polygon points="93.3,-8.5 95.3,-7.2 89.0,2.5 87.0,1.2" fill="#1d2027"/><polygon points="81.1,-11.8 92.6,-9.4 92.9,-7.9 84.0,5.9 81.0,7.2 71.1,5.2 70.3,3.1 79.1,-10.7" fill="#2b2f37"/><polygon points="78.4,-6.6 88.8,-4.5 86.8,0.8 73.9,-1.8" fill="#4a5262"/><polygon points="81.7,-11.3 91.6,-9.3 88.7,-4.3 78.3,-6.5" fill="#7c8490"/><polygon points="6.8,17.5 14.2,19.1 14.1,20.5 5.2,34.3 2.9,35.7 -3.5,34.5 -3.6,32.5 5.2,18.7" fill="#2b2e35" opacity="0.55"/><polygon points="8.1,13.7 11.7,16.1 11.6,17.5 2.7,31.3 0.4,32.7 -3.2,30.3" fill="#c9ced8"/><polygon points="8.4,14.5 10.4,15.8 4.1,25.5 2.1,24.2" fill="#b9bec8"/><polygon points="0.7,12.1 8.1,13.7 8.0,15.1 -0.9,28.9 -3.2,30.3 -9.6,29.1 -9.7,27.1 -0.9,13.3" fill="#e6e8ec"/><polygon points="-2.2,17.3 4.5,18.6 2.1,23.8 -6.2,22.1" fill="#23262e"/><polygon points="1.0,12.6 7.4,13.9 4.4,18.8 -2.3,17.4" fill="#f0f0f2"/><polygon points="21.1,12.1 31.8,14.3 32.2,15.5 25.6,25.8 23.0,26.7 13.8,24.9 12.8,23.2 19.5,12.9" fill="#2b2e35" opacity="0.55"/><polygon points="25.7,8.9 29.3,11.3 29.7,12.5 23.1,22.8 20.5,23.7 16.9,21.3" fill="#c4cede"/><polygon points="26.4,9.6 28.4,10.9 23.7,18.2 21.7,16.9" fill="#2a2e38"/><polygon points="15.0,6.7 25.7,8.9 26.1,10.1 19.5,20.4 16.9,21.3 7.7,19.5 6.7,17.8 13.4,7.5" fill="#e0e7f4"/><polygon points="13.1,10.6 22.8,12.6 21.5,16.6 9.5,14.1" fill="#46526a"/><polygon points="15.6,7.1 24.8,9.0 22.7,12.7 13.0,10.7" fill="#f0f4fa"/><polygon points="39.7,11.6 51.2,14.0 51.3,15.7 41.1,31.6 38.0,33.1 28.1,31.1 27.4,28.8 37.6,12.9" fill="#2b2e35" opacity="0.55"/><polygon points="45.1,8.6 48.7,11.0 48.8,12.7 38.6,28.6 35.5,30.1 31.9,27.7" fill="#a3bfd9"/><polygon points="45.7,9.6 47.7,10.9 40.5,22.1 38.5,20.8" fill="#23262e"/><polygon points="33.6,6.2 45.1,8.6 45.2,10.3 35.0,26.2 31.9,27.7 22.0,25.7 21.3,23.4 31.5,7.5" fill="#bcd3e6"/><polygon points="30.4,12.1 40.8,14.3 38.4,20.3 25.5,17.7" fill="#7f86b8"/><polygon points="34.2,6.8 44.1,8.8 40.7,14.5 30.3,12.3" fill="#d8d4c8"/><polygon points="60.1,21.9 70.8,24.1 71.1,25.5 63.1,37.9 60.3,39.1 51.2,37.2 50.4,35.3 58.3,22.9" fill="#2b2e35" opacity="0.55"/><polygon points="64.7,18.7 68.3,21.1 68.6,22.5 60.6,34.9 57.8,36.1 54.2,33.7" fill="#1a1c22"/><polygon points="65.4,19.5 67.3,20.8 61.7,29.6 59.7,28.3" fill="#101116"/><polygon points="54.0,16.5 64.7,18.7 65.0,20.1 57.0,32.5 54.2,33.7 45.1,31.8 44.3,29.9 52.2,17.5" fill="#262830"/><polygon points="51.6,21.1 61.3,23.1 59.5,27.9 47.6,25.4" fill="#3c4a66"/><polygon points="54.6,17.0 63.8,18.8 61.2,23.3 51.5,21.3" fill="#8a90a0"/><polygon points="16.6,27.3 27.3,29.5 27.4,31.2 17.6,46.3 14.7,47.8 5.5,45.9 4.9,43.7 14.6,28.6" fill="#2b2e35" opacity="0.55"/><polygon points="21.2,24.1 24.8,26.5 24.9,28.2 15.1,43.3 12.2,44.8 8.6,42.4" fill="#c2c0ba"/><polygon points="21.8,25.0 23.7,26.4 16.9,37.1 14.9,35.8" fill="#44474e"/><polygon points="10.5,21.9 21.2,24.1 21.3,25.8 11.5,40.9 8.6,42.4 -0.6,40.5 -1.2,38.3 8.5,23.2" fill="#dcdad4"/><polygon points="7.5,27.6 17.1,29.5 14.7,35.3 2.8,32.9" fill="#5b8db4"/><polygon points="11.0,22.4 20.2,24.3 17.0,29.7 7.3,27.7" fill="#e6dfcf"/><polygon points="82.2,25.1 93.7,27.5 93.8,29.2 83.6,45.1 80.5,46.6 70.6,44.6 69.9,42.3 80.1,26.4" fill="#2b2e35" opacity="0.55"/><polygon points="87.6,22.1 91.2,24.5 91.3,26.2 81.1,42.1 78.0,43.6 74.4,41.2" fill="#5a7a9e"/><polygon points="88.2,23.1 90.2,24.4 83.0,35.6 81.0,34.3" fill="#2a3444"/><polygon points="76.1,19.7 87.6,22.1 87.7,23.8 77.5,39.7 74.4,41.2 64.5,39.2 63.8,36.9 74.0,21.0" fill="#7d9aba"/><polygon points="72.9,25.6 83.3,27.8 80.9,33.8 68.0,31.2" fill="#86a6c6"/><polygon points="76.7,20.3 86.6,22.3 83.2,28.0 72.8,25.8" fill="#c9d0da"/><polygon points="37.6,33.8 49.9,36.4 50.0,38.3 38.5,56.3 35.0,58.0 24.4,55.9 23.8,53.3 35.3,35.3" fill="#2b2e35" opacity="0.55"/><polygon points="43.8,31.0 47.4,33.4 47.5,35.3 36.0,53.3 32.5,55.0 28.9,52.6" fill="#1c1e26"/><polygon points="44.4,32.1 46.4,33.4 38.3,46.1 36.3,44.7" fill="#14151a"/><polygon points="31.5,28.4 43.8,31.0 43.9,32.9 32.4,50.9 28.9,52.6 18.3,50.5 17.7,47.9 29.2,29.9" fill="#3c4256"/><polygon points="27.9,35.1 39.0,37.4 36.1,44.2 22.3,41.4" fill="#44709a"/><polygon points="32.1,29.1 42.7,31.2 38.9,37.6 27.7,35.3" fill="#948c94"/><polygon points="97.7,32.6 109.2,35.0 109.3,36.8 98.7,53.3 95.4,55.0 85.6,53.0 84.9,50.5 95.6,34.0" fill="#2b2e35" opacity="0.55"/><polygon points="103.1,29.6 106.7,32.0 106.8,33.8 96.2,50.3 92.9,52.0 89.3,49.6" fill="#c4ccd8"/><polygon points="103.7,30.6 105.7,31.9 98.2,43.6 96.2,42.3" fill="#8a94a4"/><polygon points="91.6,27.2 103.1,29.6 103.2,31.4 92.6,47.9 89.3,49.6 79.5,47.6 78.8,45.1 89.5,28.6" fill="#e8edf4"/><polygon points="88.3,33.4 98.7,35.5 96.0,41.8 83.1,39.2" fill="#7088a4"/><polygon points="92.2,27.8 102.0,29.8 98.6,35.7 88.1,33.6" fill="#f6f7fa"/><polygon points="57.6,43.4 68.3,45.6 68.5,47.1 59.6,60.9 56.8,62.2 47.6,60.4 46.9,58.3 55.7,44.5" fill="#2b2e35" opacity="0.55"/><polygon points="62.2,40.2 65.8,42.6 66.0,44.1 57.1,57.9 54.3,59.2 50.7,56.8" fill="#2c468a"/><polygon points="62.8,41.1 64.8,42.4 58.5,52.1 56.5,50.8" fill="#1c2a50"/><polygon points="51.5,38.0 62.2,40.2 62.4,41.7 53.5,55.5 50.7,56.8 41.5,55.0 40.8,52.9 49.6,39.1" fill="#2f4c92"/><polygon points="48.8,43.2 58.5,45.1 56.4,50.4 44.4,48.0" fill="#3f62a8"/><polygon points="52.1,38.5 61.2,40.4 58.4,45.3 48.7,43.3" fill="#6f80c0"/><polygon points="85.0,49.6 94.0,51.4 94.4,52.4 89.0,60.7 86.9,61.4 79.1,59.8 78.3,58.5 83.6,50.2" fill="#2b2e35" opacity="0.55"/><polygon points="87.9,46.0 91.5,48.4 91.9,49.4 86.5,57.7 84.4,58.4 80.8,56.0" fill="#c8ccd4"/><polygon points="88.5,46.6 90.5,47.9 86.7,53.8 84.8,52.4" fill="#a0a8b4"/><polygon points="78.9,44.2 87.9,46.0 88.3,47.0 82.9,55.3 80.8,56.0 73.0,54.4 72.2,53.1 77.5,44.8" fill="#eef0f4"/><polygon points="77.3,47.3 85.5,49.0 84.6,52.2 74.4,50.1" fill="#8090a8"/><polygon points="79.4,44.5 87.1,46.1 85.5,49.1 77.3,47.4" fill="#f8f8f8"/></g></svg></div>
<div class="badge" style="left:1995.2px;top:758px;width:100px"></div><div class="t" style="left:2002.2px;top:764.4px;font-size:20.8px;color:#fff;transform:scaleX(0.9919);">Parkplatz</div><div class="badge" style="left:2296px;top:758px;width:76px"></div><div class="t" style="left:2303px;top:764.4px;font-size:20.8px;color:#fff;transform:scaleX(1.0946);">0.6km</div>
<div class="t" style="left:2009.6px;top:980px;font-size:26px;font-weight:bold;color:#333;transform:scaleX(1.0082);">Grömitz: Parkplatz</div><div class="t" style="left:2009.6px;top:1014px;font-size:26px;font-weight:bold;color:#333;">Kirchenstraße</div>
<div class="live" style="left:2008.4px;top:1075.2px;width:81.2px;height:39.6px"></div><div class="t" style="left:2024.8px;top:1082.72px;font-size:25.6px;font-weight:bold;color:#fff;transform:scaleX(0.8578);">LIVE</div>
<div class="pc" style="left:677.6px;top:1271.2px"><svg width="401.6" height="202.8" viewBox="0 0 99 51" preserveAspectRatio="none" style="left:-2.4px;top:-2.4px"><use href="#beachpic" x="0" y="-8.3" width="99" height="71.1"/></svg></div>
<div class="badge" style="left:687.2px;top:1284px;width:74.4px"></div><div class="t" style="left:694.4px;top:1290.4px;font-size:20.8px;color:#fff;transform:scaleX(0.9791);">Strand</div><div class="badge" style="left:988px;top:1284px;width:76px"></div><div class="t" style="left:995px;top:1290.4px;font-size:20.8px;color:#fff;transform:scaleX(1.0946);">0.2km</div>
<div class="t" style="left:701.6px;top:1503.6px;font-size:26px;font-weight:bold;color:#333;">Grömitz - Strand</div>
<div class="live" style="left:700.4px;top:1601.2px;width:81.2px;height:39.6px"></div><div class="t" style="left:716.8px;top:1608.72px;font-size:25.6px;font-weight:bold;color:#fff;transform:scaleX(0.8578);">LIVE</div>
<div class="pc" style="left:1113.6px;top:1271.2px"><svg width="401.6" height="202.8" viewBox="0 0 99 51" preserveAspectRatio="none" style="left:-2.4px;top:-2.4px"><use href="#beachpic" x="0" y="-8.3" width="99" height="71.1"/></svg></div>
<div class="badge" style="left:1123.2px;top:1284px;width:74.4px"></div><div class="t" style="left:1130.4px;top:1290.4px;font-size:20.8px;color:#fff;transform:scaleX(0.9791);">Strand</div><div class="badge" style="left:1424px;top:1284px;width:76px"></div><div class="t" style="left:1431px;top:1290.4px;font-size:20.8px;color:#fff;transform:scaleX(1.0946);">2.3km</div>
<div class="t" style="left:1137.6px;top:1503.6px;font-size:26px;font-weight:bold;color:#333;">Lenste</div>
<div class="live" style="left:1136.4px;top:1601.2px;width:81.2px;height:39.6px"></div><div class="t" style="left:1152.8px;top:1608.72px;font-size:25.6px;font-weight:bold;color:#fff;transform:scaleX(0.8578);">LIVE</div>
<div class="pc" style="left:1549.2px;top:1271.2px"><svg width="401.6" height="202.8" viewBox="0 0 99 51" preserveAspectRatio="none" style="left:-2.4px;top:-2.4px"><use href="#beachpic" x="0" y="-8.3" width="99" height="71.1"/></svg></div>
<div class="badge" style="left:1558.8px;top:1284px;width:74.4px"></div><div class="t" style="left:1566px;top:1290.4px;font-size:20.8px;color:#fff;transform:scaleX(0.9791);">Strand</div><div class="badge" style="left:1859.6px;top:1284px;width:76px"></div><div class="t" style="left:1866.6px;top:1290.4px;font-size:20.8px;color:#fff;transform:scaleX(1.0946);">6.9km</div>
<div class="t" style="left:1573.2px;top:1503.6px;font-size:26px;font-weight:bold;color:#333;">Rettin bei Neustadt i.H. -</div>
<div class="t" style="left:1573.2px;top:1537.6px;font-size:26px;font-weight:bold;color:#333;">Badestrand</div>
<div class="pc" style="left:1985.6px;top:1271.2px"><svg width="401.6" height="202.8" viewBox="0 0 99 51" preserveAspectRatio="none" style="left:-2.4px;top:-2.4px"><defs><linearGradient id="kbg" x1="0" y1="0" x2="0" y2="1"><stop offset="0" stop-color="#93a3b0"/><stop offset="0.8" stop-color="#a9b5bd"/><stop offset="1" stop-color="#b0b8bc"/></linearGradient><filter id="kb" x="-5%" y="-5%" width="110%" height="110%"><feGaussianBlur stdDeviation="0.4"/></filter></defs>
<rect width="99" height="51" fill="url(#kbg)"/>
<g filter="url(#kb)">
<path d="M0 47L30 46L60 47.5L99 44V51H0Z" fill="#b9a88e"/>
<path d="M45 1L52 0H65L64 10L60.5 20L62 29L69 35.5L79 41L92 39L94 43L88 47.5L74 50L58 47.5L48 42L42 33L39.5 24L41 13Z" fill="#f4cf22"/>
<path d="M46 4L52 10L50 20L53 30L62 38L74 43L70 46L58 44L49 38L43 28L42 16Z" fill="#f2ab14" opacity=".75"/>
<path d="M52 2L62 1.5L61 10L56 16L50 12Z" fill="#f8e04a"/>
<path d="M50 5L57.5 4.5L58 11L51 11.5Z" fill="#3a9aa8"/>
<path d="M60 36L68 38L74 42L66 42Z" fill="#4aa0a8"/>
<path d="M74 44L88 41L93 40L94 43L86 48L72 49Z" fill="#20242c"/>
<path d="M70 48L86 47L84 51H66Z" fill="#2a98a8"/>
<!-- man -->
<ellipse cx="35" cy="20" rx="1.9" ry="2.3" fill="#b8846a"/>
<path d="M31.5 23L38 22.5L41.5 25L40.5 27L38.5 26.5L38 32H31Z" fill="#e6e8f0"/>
<path d="M30.5 29L38 28.5L38.5 35H31Z" fill="#2a2c34"/>
<path d="M32 35H38.5L38 42H32.5Z" fill="#a89c88"/>
<path d="M33 42H37.5L37 50H34Z" fill="#c08a6a"/>
<path d="M33 49.5H38.5V51H33Z" fill="#222"/>
</g></svg></div>
<div class="badge" style="left:1995.2px;top:1284px;width:152px"></div><div class="t" style="left:2002.4px;top:1290.4px;font-size:20.8px;color:#fff;transform:scaleX(1.0919);">Surfen / Kiten</div><div class="badge" style="left:2296px;top:1284px;width:76px"></div><div class="t" style="left:2303px;top:1290.4px;font-size:20.8px;color:#fff;transform:scaleX(1.0946);">7.6km</div>
<div class="t" style="left:2009.6px;top:1503.6px;font-size:26px;font-weight:bold;color:#333;">Wassersport Kellenhusen</div>
<div class="card" style="left:632.8px;top:1747.2px;width:1840px;height:556px;border-radius:20px"><svg width="1768" height="556" viewBox="0 0 442 139" style="position:absolute;left:-2.4px;top:-2.4px"><defs><pattern id="bld" width="7" height="6" patternUnits="userSpaceOnUse" patternTransform="rotate(-31)"><rect width="7" height="6" fill="#e1dfdd"/><rect x="0.8" y="0.9" width="3.4" height="1.7" fill="#d3cac2"/><rect x="4.6" y="3.4" width="1.8" height="1.8" fill="#d3cac2"/><rect x="1.2" y="3.6" width="2.2" height="1.4" fill="#d6cec6"/></pattern><pattern id="dots" width="2" height="2" patternUnits="userSpaceOnUse"><rect width="2" height="2" fill="#add19e"/><circle cx="1" cy="1" r="0.35" fill="#8fc08a"/></pattern><pattern id="dots2" width="2" height="2" patternUnits="userSpaceOnUse"><rect width="2" height="2" fill="#c3e3a6"/><circle cx="1" cy="1" r="0.3" fill="#a5d092"/></pattern><clipPath id="uc"><polygon points="142.8,0.0 141.8,33.2 139.8,49.2 126.8,60.2 114.3,69.0 116.8,77.7 103.0,91.5 106.8,105.2 119.3,120.2 114.3,131.2 94.8,139.0 146.8,139.0 151.8,131.5 161.8,115.2 176.8,103.2 199.3,90.2 221.8,77.7 246.8,62.7 271.8,48.2 296.8,36.0 321.8,21.5 346.8,7.8 360.5,0.0"/></clipPath></defs><rect width="442" height="139" fill="#eef0d5"/><polygon points="0,111 21.8,117.6 46.8,126 83,138.5 83,139 0,139" fill="#f0efdb"/><polygon points="48.0,126.5 71.8,95.2 91.8,82.7 106.8,70.2 114.3,68.2 116.3,77.7 103.0,91.5 106.8,105.2 119.3,120.2 114.3,130.2 106.8,131.5 96.8,125.2 83.0,126.5 81.8,137.7" fill="#cdebb0"/><polygon points="106.8,14.0 114.3,17.7 129.3,10.2 141.8,8.0 142.0,24.0 125.5,24.7 124.3,49.0 121.8,66.5 109.3,67.7 108.0,36.5" fill="#d3edb6"/><polygon points="108.6,37.5 122.6,36.8 122.4,64.8 110.0,67.0" fill="#eef0d5"/><polygon points="79.3,25.2 106.8,14.0 107.2,35.2 86.8,40.2" fill="url(#dots2)"/><polygon points="60.5,32.7 70.5,16.5 74.3,20.2 79.3,29.0 85.5,40.2 93.0,54.0 100.5,57.7 99.3,62.7 91.8,65.2 81.8,75.2 71.8,81.5 66.8,77.7 64.3,70.2 63.0,52.7" fill="url(#dots)"/><polygon points="66.0,66.0 88.0,44.0 91.0,50.0 69.0,73.0" fill="#c3e3a6"/><polygon points="64.0,58.0 84.0,38.0 86.0,41.0 65.0,63.0" fill="#b9db9f"/><polygon points="40.5,75.2 49.3,72.7 64.3,75.2 68.0,80.2 56.8,79.0 46.8,79.0" fill="#add19e"/><path d="M65.5 79Q72 88 82 90Q90 89 93 84" fill="none" stroke="#add19e" stroke-width="2.4"/><ellipse cx="78" cy="76" rx="2.6" ry="1.6" fill="#8fc08a" transform="rotate(-35 78 76)"/><polygon points="16.3,0.2 21.3,0.2 23,6.5 16.8,10.2" fill="#add19e"/><circle cx="70.8" cy="20.5" r="1" fill="#aad3df"/><circle cx="78" cy="28" r="1.1" fill="#aad3df"/><polygon points="94.3,6.5 101.8,2.7 110.0,0.0 130.0,0.0 133.0,10.2 114.3,17.7 106.8,14.0 95.5,15.2" fill="#f6dcbc"/><rect x="98" y="7" width="3" height="1.8" fill="#e0c8b4" transform="rotate(-12 98 7)"/><rect x="103" y="5" width="3" height="1.8" fill="#e0c8b4" transform="rotate(-12 103 5)"/><rect x="108" y="3" width="3" height="1.8" fill="#e0c8b4" transform="rotate(-12 108 3)"/><rect x="113" y="4" width="3" height="1.8" fill="#e0c8b4" transform="rotate(-12 113 4)"/><rect x="118" y="2.5" width="3" height="1.8" fill="#e0c8b4" transform="rotate(-12 118 2.5)"/><rect x="123" y="4" width="3" height="1.8" fill="#e0c8b4" transform="rotate(-12 123 4)"/><rect x="127" y="6" width="3" height="1.8" fill="#e0c8b4" transform="rotate(-12 127 6)"/><rect x="100" y="11" width="3" height="1.8" fill="#e0c8b4" transform="rotate(-12 100 11)"/><rect x="105" y="10" width="3" height="1.8" fill="#e0c8b4" transform="rotate(-12 105 10)"/><rect x="111" y="9" width="3" height="1.8" fill="#e0c8b4" transform="rotate(-12 111 9)"/><rect x="117" y="8" width="3" height="1.8" fill="#e0c8b4" transform="rotate(-12 117 8)"/><rect x="123" y="10" width="3" height="1.8" fill="#e0c8b4" transform="rotate(-12 123 10)"/><rect x="116" y="13" width="3" height="1.8" fill="#e0c8b4" transform="rotate(-12 116 13)"/><path d="M101 0L106 6L112 12L116 17M106 6L118 3L128 1" fill="none" stroke="#8b6a4a" stroke-width="0.45"/><circle cx="131" cy="17.5" r="1.8" fill="#aad3df"/><polygon points="80.5,131.5 91.8,125.2 99.3,127.7 94.3,139.0 81.8,139.0" fill="#f4dad2"/><polygon points="125.5,25.2 139.8,24 139.8,46.5 125.5,47.7" fill="#aae0cb" stroke="#8ccbb4" stroke-width="0.4"/><polygon points="142.8,0.0 141.8,33.2 139.8,49.2 126.8,60.2 114.3,69.0 116.8,77.7 103.0,91.5 106.8,105.2 119.3,120.2 114.3,131.2 94.8,139.0 146.8,139.0 151.8,131.5 161.8,115.2 176.8,103.2 199.3,90.2 221.8,77.7 246.8,62.7 271.8,48.2 296.8,36.0 321.8,21.5 346.8,7.8 360.5,0.0" fill="url(#bld)"/><g clip-path="url(#uc)"><polygon points="154.3,0.2 166.8,0.2 166.8,10.2 156.8,12.7" fill="#aae0cb"/><polygon points="141,8 147,8 147,22 141,24" fill="#aae0cb"/><polygon points="141,27 146,25 147,44 141,46" fill="#b9dfb0"/><polygon points="161.8,19 180.6,17.7 183,42.7 166.8,45.2" fill="#add6a5"/><polygon points="186.8,4 211.8,2.7 219.3,10.2 211.8,22.7 201.8,42.7 194.3,27.7" fill="#c8ecc2"/><polygon points="211.8,5 225.5,4 225.5,20.2 216.8,22.7" fill="#b5dcae"/><ellipse cx="198" cy="12.7" rx="4.2" ry="3.2" fill="#aad3df" stroke="#8fbccb" stroke-width="0.5"/><polygon points="141.8,45.2 151.8,44 159.3,60.2 146.8,65.2" fill="#f5f0c4"/><polygon points="164.3,55.2 184.3,54 186.8,70.2 169.3,75.2" fill="#ececec"/><polygon points="170,71 182,66 186,70 172,77" fill="#c8ecc2"/><polygon points="176.8,90.2 194.3,80.2 209.3,77.7 186.8,100.2" fill="#c8ecc2"/><polygon points="150,118 160,104 165,108 153,126" fill="#c8ecc2"/><polygon points="231.8,53.8 244.3,49.0 296.8,27.7 330.0,9.0 346.0,0.5 352.0,0.5 334.0,11.0 301.8,32.7 249.3,55.2 236.0,62.0" fill="#c8ecc2"/><polygon points="300,24 326,10 329,14 304,29" fill="#c4c8b4"/><polygon points="253,46 260,43 262,47 255,50" fill="#9fd8b6"/><polyline points="146.2,138.0 151.2,130.5 161.2,114.2 176.2,102.2 198.7,89.2 221.2,76.7 246.2,61.7 271.2,47.2 296.2,35.0 321.2,20.5 346.2,6.8 359.9,-1.0" fill="none" stroke="#cbc6c0" stroke-width="1.9"/><polyline points="101.8,93.0 118.0,84.0 140.0,72.0 160.0,60.0 178.0,55.0 200.0,47.0 222.0,40.0 236.0,36.0 258.0,26.0 280.0,14.0 300.0,3.0 306.0,0.0" fill="none" stroke="#cbc6c0" stroke-width="1.9"/><polyline points="120.0,118.0 140.0,104.0 156.0,92.0 170.0,82.0 186.0,74.0 205.0,66.0 224.0,58.0 236.0,50.0" fill="none" stroke="#cbc6c0" stroke-width="1.9"/><polyline points="142.0,0.0 150.0,14.0 152.0,30.0 158.0,45.0 168.0,52.0 186.0,52.0 200.0,46.0" fill="none" stroke="#cbc6c0" stroke-width="1.9"/><polyline points="186.0,0.0 190.0,14.0 186.0,30.0 190.0,46.0 200.0,58.0 212.0,68.0 222.0,78.0" fill="none" stroke="#cbc6c0" stroke-width="1.9"/><polyline points="226.0,0.0 228.0,16.0 232.0,30.0 236.0,44.0 240.0,58.0 243.0,66.0" fill="none" stroke="#cbc6c0" stroke-width="1.9"/><polyline points="236.0,36.0 250.0,30.0 262.0,18.0 270.0,8.0 274.0,0.0" fill="none" stroke="#cbc6c0" stroke-width="1.9"/><polyline points="252.0,0.0 258.0,12.0 262.0,18.0" fill="none" stroke="#cbc6c0" stroke-width="1.9"/><polyline points="262.0,18.0 276.0,30.0 286.0,38.0" fill="none" stroke="#cbc6c0" stroke-width="1.9"/><polyline points="300.0,3.0 310.0,14.0 318.0,20.0" fill="none" stroke="#cbc6c0" stroke-width="1.9"/><polyline points="320.0,0.0 330.0,6.0 336.0,10.0" fill="none" stroke="#cbc6c0" stroke-width="1.9"/><polyline points="118.0,84.0 126.0,98.0 136.0,110.0 146.0,122.0 152.0,132.0" fill="none" stroke="#cbc6c0" stroke-width="1.9"/><polyline points="140.0,72.0 148.0,86.0 158.0,98.0 168.0,106.0" fill="none" stroke="#cbc6c0" stroke-width="1.9"/><polyline points="126.0,60.0 134.0,72.0 140.0,72.0" fill="none" stroke="#cbc6c0" stroke-width="1.9"/><polyline points="106.8,105.0 120.0,100.0 126.0,98.0" fill="none" stroke="#cbc6c0" stroke-width="1.9"/><polyline points="119.0,120.0 130.0,114.0 136.0,110.0" fill="none" stroke="#cbc6c0" stroke-width="1.9"/><polyline points="160.0,60.0 166.0,72.0 176.0,86.0 182.0,96.0" fill="none" stroke="#cbc6c0" stroke-width="1.9"/><polyline points="200.0,47.0 204.0,58.0 205.0,66.0" fill="none" stroke="#cbc6c0" stroke-width="1.9"/><polyline points="212.0,22.0 222.0,40.0" fill="none" stroke="#cbc6c0" stroke-width="1.9"/><polyline points="100.0,139.0 112.0,132.0 130.0,126.0 146.0,122.0" fill="none" stroke="#cbc6c0" stroke-width="1.9"/><polyline points="128.0,139.0 138.0,130.0 152.0,132.0" fill="none" stroke="#cbc6c0" stroke-width="1.9"/><polyline points="142.0,33.0 152.0,30.0" fill="none" stroke="#cbc6c0" stroke-width="1.9"/><polyline points="166.0,10.0 176.0,14.0 186.0,14.0" fill="none" stroke="#cbc6c0" stroke-width="1.9"/><polyline points="146.2,138.0 151.2,130.5 161.2,114.2 176.2,102.2 198.7,89.2 221.2,76.7 246.2,61.7 271.2,47.2 296.2,35.0 321.2,20.5 346.2,6.8 359.9,-1.0" fill="none" stroke="#ffffff" stroke-width="1.3"/><polyline points="101.8,93.0 118.0,84.0 140.0,72.0 160.0,60.0 178.0,55.0 200.0,47.0 222.0,40.0 236.0,36.0 258.0,26.0 280.0,14.0 300.0,3.0 306.0,0.0" fill="none" stroke="#ffffff" stroke-width="1.3"/><polyline points="120.0,118.0 140.0,104.0 156.0,92.0 170.0,82.0 186.0,74.0 205.0,66.0 224.0,58.0 236.0,50.0" fill="none" stroke="#ffffff" stroke-width="1.3"/><polyline points="142.0,0.0 150.0,14.0 152.0,30.0 158.0,45.0 168.0,52.0 186.0,52.0 200.0,46.0" fill="none" stroke="#ffffff" stroke-width="1.3"/><polyline points="186.0,0.0 190.0,14.0 186.0,30.0 190.0,46.0 200.0,58.0 212.0,68.0 222.0,78.0" fill="none" stroke="#ffffff" stroke-width="1.3"/><polyline points="226.0,0.0 228.0,16.0 232.0,30.0 236.0,44.0 240.0,58.0 243.0,66.0" fill="none" stroke="#ffffff" stroke-width="1.3"/><polyline points="236.0,36.0 250.0,30.0 262.0,18.0 270.0,8.0 274.0,0.0" fill="none" stroke="#ffffff" stroke-width="1.3"/><polyline points="252.0,0.0 258.0,12.0 262.0,18.0" fill="none" stroke="#ffffff" stroke-width="1.3"/><polyline points="262.0,18.0 276.0,30.0 286.0,38.0" fill="none" stroke="#ffffff" stroke-width="1.3"/><polyline points="300.0,3.0 310.0,14.0 318.0,20.0" fill="none" stroke="#ffffff" stroke-width="1.3"/><polyline points="320.0,0.0 330.0,6.0 336.0,10.0" fill="none" stroke="#ffffff" stroke-width="1.3"/><polyline points="118.0,84.0 126.0,98.0 136.0,110.0 146.0,122.0 152.0,132.0" fill="none" stroke="#ffffff" stroke-width="1.3"/><polyline points="140.0,72.0 148.0,86.0 158.0,98.0 168.0,106.0" fill="none" stroke="#ffffff" stroke-width="1.3"/><polyline points="126.0,60.0 134.0,72.0 140.0,72.0" fill="none" stroke="#ffffff" stroke-width="1.3"/><polyline points="106.8,105.0 120.0,100.0 126.0,98.0" fill="none" stroke="#ffffff" stroke-width="1.3"/><polyline points="119.0,120.0 130.0,114.0 136.0,110.0" fill="none" stroke="#ffffff" stroke-width="1.3"/><polyline points="160.0,60.0 166.0,72.0 176.0,86.0 182.0,96.0" fill="none" stroke="#ffffff" stroke-width="1.3"/><polyline points="200.0,47.0 204.0,58.0 205.0,66.0" fill="none" stroke="#ffffff" stroke-width="1.3"/><polyline points="212.0,22.0 222.0,40.0" fill="none" stroke="#ffffff" stroke-width="1.3"/><polyline points="100.0,139.0 112.0,132.0 130.0,126.0 146.0,122.0" fill="none" stroke="#ffffff" stroke-width="1.3"/><polyline points="128.0,139.0 138.0,130.0 152.0,132.0" fill="none" stroke="#ffffff" stroke-width="1.3"/><polyline points="142.0,33.0 152.0,30.0" fill="none" stroke="#ffffff" stroke-width="1.3"/><polyline points="166.0,10.0 176.0,14.0 186.0,14.0" fill="none" stroke="#ffffff" stroke-width="1.3"/><polyline points="116.0,80.0 122.0,90.0 128.0,86.0 134.0,96.0" fill="none" stroke="#8c8c8c" stroke-width="1.2" stroke-linecap="round"/><polyline points="116.0,80.0 122.0,90.0 128.0,86.0 134.0,96.0" fill="none" stroke="#eeeeee" stroke-width="0.7" stroke-linecap="round"/><polyline points="108.0,100.0 114.0,108.0 124.0,104.0" fill="none" stroke="#8c8c8c" stroke-width="1.2" stroke-linecap="round"/><polyline points="108.0,100.0 114.0,108.0 124.0,104.0" fill="none" stroke="#eeeeee" stroke-width="0.7" stroke-linecap="round"/><polyline points="124.0,122.0 130.0,132.0" fill="none" stroke="#8c8c8c" stroke-width="1.2" stroke-linecap="round"/><polyline points="124.0,122.0 130.0,132.0" fill="none" stroke="#eeeeee" stroke-width="0.7" stroke-linecap="round"/><polyline points="112.0,112.0 120.0,124.0" fill="none" stroke="#8c8c8c" stroke-width="1.2" stroke-linecap="round"/><polyline points="112.0,112.0 120.0,124.0" fill="none" stroke="#eeeeee" stroke-width="0.7" stroke-linecap="round"/><polyline points="128.0,64.0 138.0,60.0 146.0,66.0 140.0,76.0" fill="none" stroke="#8c8c8c" stroke-width="1.2" stroke-linecap="round"/><polyline points="128.0,64.0 138.0,60.0 146.0,66.0 140.0,76.0" fill="none" stroke="#eeeeee" stroke-width="0.7" stroke-linecap="round"/><polyline points="150.0,72.0 158.0,84.0" fill="none" stroke="#8c8c8c" stroke-width="1.2" stroke-linecap="round"/><polyline points="150.0,72.0 158.0,84.0" fill="none" stroke="#eeeeee" stroke-width="0.7" stroke-linecap="round"/><polyline points="146.0,50.0 156.0,58.0 166.0,52.0" fill="none" stroke="#8c8c8c" stroke-width="1.2" stroke-linecap="round"/><polyline points="146.0,50.0 156.0,58.0 166.0,52.0" fill="none" stroke="#eeeeee" stroke-width="0.7" stroke-linecap="round"/><polyline points="170.0,84.0 178.0,96.0" fill="none" stroke="#8c8c8c" stroke-width="1.2" stroke-linecap="round"/><polyline points="170.0,84.0 178.0,96.0" fill="none" stroke="#eeeeee" stroke-width="0.7" stroke-linecap="round"/><polyline points="204.0,24.0 210.0,36.0 220.0,34.0" fill="none" stroke="#8c8c8c" stroke-width="1.2" stroke-linecap="round"/><polyline points="204.0,24.0 210.0,36.0 220.0,34.0" fill="none" stroke="#eeeeee" stroke-width="0.7" stroke-linecap="round"/><polyline points="240.0,14.0 246.0,26.0" fill="none" stroke="#8c8c8c" stroke-width="1.2" stroke-linecap="round"/><polyline points="240.0,14.0 246.0,26.0" fill="none" stroke="#eeeeee" stroke-width="0.7" stroke-linecap="round"/><polyline points="264.0,4.0 270.0,14.0" fill="none" stroke="#8c8c8c" stroke-width="1.2" stroke-linecap="round"/><polyline points="264.0,4.0 270.0,14.0" fill="none" stroke="#eeeeee" stroke-width="0.7" stroke-linecap="round"/><polyline points="282.0,22.0 290.0,32.0" fill="none" stroke="#8c8c8c" stroke-width="1.2" stroke-linecap="round"/><polyline points="282.0,22.0 290.0,32.0" fill="none" stroke="#eeeeee" stroke-width="0.7" stroke-linecap="round"/><polyline points="172.0,48.0 180.0,60.0" fill="none" stroke="#8c8c8c" stroke-width="1.2" stroke-linecap="round"/><polyline points="172.0,48.0 180.0,60.0" fill="none" stroke="#eeeeee" stroke-width="0.7" stroke-linecap="round"/></g><polygon points="146.8,139.0 151.8,131.5 161.8,115.2 176.8,103.2 199.3,90.2 221.8,77.7 246.8,62.7 271.8,48.2 296.8,36.0 321.8,21.5 346.8,7.8 360.5,0.0 371.5,0.0 351.8,11.7 329.3,24.2 304.3,39.0 281.8,52.5 256.8,67.9 236.8,79.0 221.8,86.5 206.8,98.2 186.8,110.7 171.8,125.2 163.0,139.0" fill="#f5e4a8"/><polygon points="163.0,139.0 171.8,125.2 186.8,110.7 206.8,98.2 221.8,86.5 236.8,79.0 256.8,67.9 281.8,52.5 304.3,39.0 329.3,24.2 351.8,11.7 371.5,0.0 442.0,0.0 442.0,139.0" fill="#aad3df"/><path d="M167.4 131.6l0.8 4.2" stroke="#9aaab0" stroke-width="0.6"/><path d="M175.6 121.1l0.8 4.2" stroke="#9aaab0" stroke-width="0.6"/><path d="M183.1 113.8l0.8 4.2" stroke="#9aaab0" stroke-width="0.6"/><path d="M191.8 107.1l0.8 4.2" stroke="#9aaab0" stroke-width="0.6"/><path d="M201.8 100.8l0.8 4.2" stroke="#9aaab0" stroke-width="0.6"/><path d="M210.6 94.8l0.8 4.2" stroke="#9aaab0" stroke-width="0.6"/><path d="M218.1 88.9l0.8 4.2" stroke="#9aaab0" stroke-width="0.6"/><path d="M225.6 84.1l0.8 4.2" stroke="#9aaab0" stroke-width="0.6"/><path d="M233.1 80.4l0.8 4.2" stroke="#9aaab0" stroke-width="0.6"/><path d="M241.8 75.7l0.8 4.2" stroke="#9aaab0" stroke-width="0.6"/><path d="M251.8 70.2l0.8 4.2" stroke="#9aaab0" stroke-width="0.6"/><path d="M261.0 64.8l0.8 4.2" stroke="#9aaab0" stroke-width="0.6"/><path d="M269.3 59.7l0.8 4.2" stroke="#9aaab0" stroke-width="0.6"/><path d="M277.6 54.6l0.8 4.2" stroke="#9aaab0" stroke-width="0.6"/><path d="M285.6 49.8l0.8 4.2" stroke="#9aaab0" stroke-width="0.6"/><path d="M293.1 45.2l0.8 4.2" stroke="#9aaab0" stroke-width="0.6"/><path d="M300.6 40.8l0.8 4.2" stroke="#9aaab0" stroke-width="0.6"/><path d="M308.5 36.0l0.8 4.2" stroke="#9aaab0" stroke-width="0.6"/><path d="M316.8 31.1l0.8 4.2" stroke="#9aaab0" stroke-width="0.6"/><path d="M325.1 26.2l0.8 4.2" stroke="#9aaab0" stroke-width="0.6"/><path d="M333.1 21.6l0.8 4.2" stroke="#9aaab0" stroke-width="0.6"/><path d="M340.6 17.4l0.8 4.2" stroke="#9aaab0" stroke-width="0.6"/><path d="M348.1 13.3l0.8 4.2" stroke="#9aaab0" stroke-width="0.6"/><path d="M356.7 8.3l0.8 4.2" stroke="#9aaab0" stroke-width="0.6"/><path d="M366.6 2.4l0.8 4.2" stroke="#9aaab0" stroke-width="0.6"/><path d="M238 139L425.5 0.7" stroke="#8a9aa8" stroke-width="0.5" stroke-dasharray="5 1"/><path d="M243 72.7L268 111.5" stroke="#c9b9b6" stroke-width="1.4"/><path d="M243 72.7L268 111.5" stroke="#f0e8e4" stroke-width="0.6"/><rect x="266.6" y="110" width="2.6" height="2.6" fill="#d8c8c4"/><path d="M-1 42C2 35 9 27 16.6 21.7S36 10.2 46.6 5.9S70 0.9 84 -0.1" fill="none" stroke="#dba45e" stroke-width="3.7"/><path d="M-1 42C2 35 9 27 16.6 21.7S36 10.2 46.6 5.9S70 0.9 84 -0.1" fill="none" stroke="#f6cd96" stroke-width="2.7"/><path d="M0 110.5L21.8 117.2L46.8 125.7L83 138.4" fill="none" stroke="#b08c5a" stroke-width="0.7" stroke-dasharray="1.4 1"/><path d="M0 116.3L26.8 124L49.3 130.2L79 139" fill="none" stroke="#fff" stroke-width="1.2"/><path d="M0 117L26.8 124.7L49.3 130.9L77 139" fill="none" stroke="#cfcfcf" stroke-width="0.3"/><path d="M79.3 25.5L86.5 40.5L107 35.5L106.8 14M86.5 40.5L92.5 54M108 36L109.5 67.5M122.8 36.5L122.4 65" fill="none" stroke="#b08c5a" stroke-width="0.7" stroke-dasharray="1.4 1"/><path d="M48.5 126L71.8 95.2" fill="none" stroke="#d9c9a8" stroke-width="0.5"/><text x="203" y="73.2" font-size="5.6" fill="#444" font-family="Liberation Sans, sans-serif" textLength="18.5" lengthAdjust="spacingAndGlyphs">Grömitz</text><text x="170.5" y="67.5" font-size="6" font-weight="bold" fill="#3388dd" font-family="Liberation Sans, sans-serif">P</text><text x="0" y="0" font-size="2.6" fill="#555" font-family="Liberation Sans, sans-serif" transform="translate(29 14.2) rotate(-25)">Neustädter Straße</text><text x="0" y="0" font-size="2.4" fill="#666" font-family="Liberation Sans, sans-serif" transform="translate(27 125) rotate(16)">Königsredder</text><text x="193" y="24" font-size="2.6" fill="#3a8a4a" font-family="Liberation Sans, sans-serif">Kurpark</text><text x="190" y="27" font-size="2.6" fill="#3a8a4a" font-family="Liberation Sans, sans-serif">der Sonnenseite</text><text x="0" y="0" font-size="2.4" fill="#b08888" font-family="Liberation Sans, sans-serif" transform="translate(249 86) rotate(57)">Seebrücke</text><text x="0" y="0" font-size="2.4" fill="#b08888" font-family="Liberation Sans, sans-serif" transform="translate(309 87) rotate(-36)">Grömitz</text><path d="M240.9 73.6C237.9 68.4 235.3 66.6 235.3 63.6A5.6 5.6 0 0 1 246.5 63.6C246.5 66.6 243.9 68.4 240.9 73.6Z" fill="#001c7c"/><circle cx="240.9" cy="63.3" r="2" fill="#fff"/><rect x="5.3" y="4.6" width="10.4" height="20.8" rx="1.5" fill="#fff" stroke="#bdbdbd" stroke-width="0.7"/><path d="M5.3 15H15.7" stroke="#ccc" stroke-width="0.5"/><text x="10.5" y="12.3" font-size="6.5" font-weight="bold" fill="#222" text-anchor="middle" font-family="Liberation Sans, sans-serif">+</text><text x="10.5" y="22.4" font-size="6.5" font-weight="bold" fill="#222" text-anchor="middle" font-family="Liberation Sans, sans-serif">−</text></svg></div>
</div></body></html>
